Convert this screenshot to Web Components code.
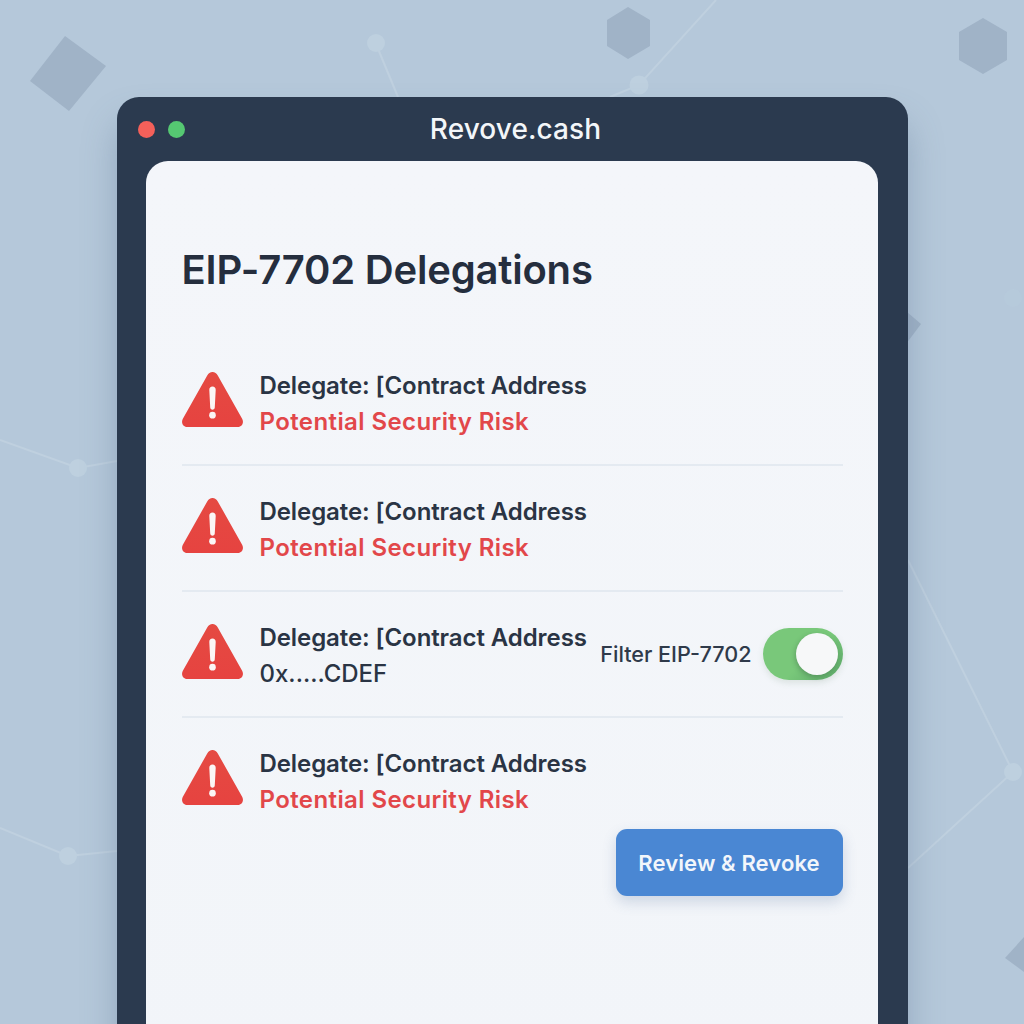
<!DOCTYPE html>
<html lang="en"><head><meta charset="utf-8"><title>Revoke.cash</title>
<style>
html,body{margin:0;padding:0;height:100%;overflow:hidden;background:#b4c7da}
</style></head><body>
<app-scene>
  <app-window title-text="Revove.cash">
    <h-title>EIP-7702 Delegations</h-title>
    <delegate-row sub="Potential Security Risk" risk divider></delegate-row>
    <delegate-row sub="Potential Security Risk" risk divider></delegate-row>
    <delegate-row sub="0x.....CDEF" divider><filter-toggle>Filter EIP-7702</filter-toggle></delegate-row>
    <delegate-row sub="Potential Security Risk" risk></delegate-row>
    <action-bar><primary-button>Review &amp; Revoke</primary-button></action-bar>
  </app-window>
</app-scene>
<script>
function def(name,html,init){
  customElements.define(name,class extends HTMLElement{
    constructor(){super();const r=this.attachShadow({mode:'open'});r.innerHTML=html;}
    connectedCallback(){if(init)init(this,this.shadowRoot);}
  });
}
def('app-scene',`<style>
:host{display:flex;justify-content:center;position:relative;width:1024px;height:1024px;overflow:hidden;padding-top:97px;box-sizing:border-box;
background:#b5c8da;font-family:Inter,"Liberation Sans",sans-serif}
svg{position:absolute;inset:0}
::slotted(*){position:relative}
</style>
<svg width="1024" height="1024" viewBox="0 0 1024 1024" aria-hidden="true">
 <g stroke="#bfd0df" stroke-width="2" fill="none">
  <path d="M376 44L398 97"/><path d="M716 0L639 85L610 97"/>
  <path d="M0 440L78 468L117 461"/><path d="M0 828L68 856L117 851"/>
  <path d="M908 560L1013 772L908 868"/>
 </g>
 <g fill="#bed0df">
  <circle cx="376" cy="43" r="9"/><circle cx="639" cy="85" r="9.500"/>
  <circle cx="78" cy="468" r="9"/><circle cx="68" cy="856" r="9"/>
  <circle cx="1013" cy="772" r="9"/><circle cx="1013" cy="298" r="9" opacity=".2"/>
 </g>
 <g fill="#a0b3c7">
  <path d="M65 36L106 66L69 111L30 81Z"/>
  <path d="M628 7L650 20V46L628 59L607 46V20Z"/>
  <path d="M983 18L1007 32V60L983 74L959 60V32Z"/>
  <path d="M900 306L921 324L900 352Z"/>
  <path d="M1024 937L1005 958L1024 972Z"/>
 </g>
</svg>
<slot></slot>`);
def('app-window',`<style>
:host{display:flex;flex-direction:column;width:791px;height:1000px;flex:none;background:#2b3a4f;border-radius:22px 22px 0 0;box-shadow:0 24px 34px rgba(85,110,140,.36);box-sizing:border-box;padding:0 30px 0 29px}
.bar{height:64px;flex:none;position:relative;display:flex;align-items:center;justify-content:center;padding-left:8px}
.dots{position:absolute;left:-8px;top:24px;display:flex;gap:13px}
.dots i{width:17px;height:17px;border-radius:50%;display:block}
.t{color:#f3f6f9;font-size:28px;font-weight:500;letter-spacing:.1px}
.card{flex:1;background:linear-gradient(180deg,#f4f6fa,#f2f5f9);border-radius:22px 22px 0 0;padding:83px 35px 0 36px;box-sizing:border-box}
</style>
<div class="bar"><div class="dots"><i style="background:#f4605a"></i><i style="background:#55c872"></i></div><div class="t"></div></div>
<div class="card"><slot></slot></div>`,(h,r)=>{r.querySelector('.t').textContent=h.getAttribute('title-text')});
def('h-title',`<style>:host{display:block;color:#252e3e;font-size:40px;line-height:52px;font-weight:600;letter-spacing:-.2px;margin-bottom:44px}</style><slot></slot>`);
def('delegate-row',`<style>
:host{display:flex;align-items:center;height:126px;box-sizing:border-box;gap:17px;position:relative;border-bottom:2px solid transparent}
:host([divider]){border-bottom-color:#e4eaf1}
svg{flex:none;width:61px;height:55px;margin-top:-5px}
.tx{flex:1;min-width:0;display:flex;flex-direction:column;font-size:24px;line-height:36px;font-weight:570;letter-spacing:-.08px;margin-top:3px;color:#2a3444;white-space:nowrap}
.s{color:#2a3444;font-weight:500;letter-spacing:0}
:host([risk]) .s{color:#e2474a;font-weight:600;letter-spacing:.4px}
::slotted(filter-toggle){margin-left:-3px}
</style>
<svg viewBox="1.500 3.500 59 51" preserveAspectRatio="none" aria-hidden="true"><defs><linearGradient id="g" x1="0" y1="0" x2="0" y2="1"><stop offset="0" stop-color="#e54a42"/><stop offset="1" stop-color="#e64340"/></linearGradient></defs><path d="M31 3.500C28.800 3.500 27 4.800 25.900 6.700L2.200 47C.4 50.500 2.500 54.500 6.500 54.500H55.500C59.500 54.500 61.600 50.500 59.800 47L36.100 6.700C35 4.800 33.200 3.500 31 3.500Z" fill="url(#g)"/><path d="M31 17c-1.900 0-3.200 1.300-3.100 3.100l.9 16.400c.1 1.200 1 2 2.200 2s2.100-.8 2.200-2l.9-16.400c.1-1.800-1.200-3.100-3.100-3.100Z" fill="#fbf6f5"/><circle cx="31" cy="43.500" r="3.200" fill="#fbf6f5"/></svg>
<div class="tx"><div>Delegate: [Contract Address</div><div class="s"></div></div><slot></slot>`,(h,r)=>{r.querySelector('.s').textContent=h.getAttribute('sub')});
def('filter-toggle',`<style>
:host{display:flex;align-items:center;gap:11px;flex:none;color:#2f3a4a;font-size:21.600px;font-weight:500;white-space:nowrap}
.sw{width:80px;height:52px;border-radius:26px;background:linear-gradient(135deg,#79c87a 55%,#5ba768);position:relative;flex:none;box-shadow:0 3px 6px rgba(80,120,90,.15)}
.k{position:absolute;right:5px;top:5px;width:42px;height:42px;border-radius:50%;background:#f7f8f9;box-shadow:-1px 2px 5px rgba(40,70,50,.3)}
</style><span><slot></slot></span><div class="sw" role="switch" aria-checked="true"><div class="k"></div></div>`);
def('action-bar',`<style>:host{display:flex;justify-content:flex-end;margin-top:-15px}</style><slot></slot>`);
def('primary-button',`<style>
:host{display:flex;align-items:center;justify-content:center;width:227px;height:67px;border-radius:11px;background:#4a87d3;color:#f2f6fb;font-size:22px;font-weight:600;letter-spacing:.1px;box-shadow:0 6px 14px rgba(70,100,150,.22);position:relative}
</style><slot></slot>`);
</script>
</body></html>
